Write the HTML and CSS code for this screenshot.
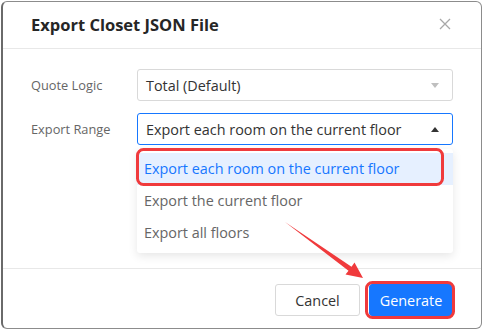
FILE: index.html
```html
<!DOCTYPE html>
<html lang="en">
<head>
    <meta charset="UTF-8">
    <meta name="viewport" content="width=device-width, initial-scale=1.0">
    <title>Export Closet JSON File</title>
    <link rel="stylesheet" href="styles.css">
</head>
<body>
    <div class="modal">
        <div class="modal-header">
            <h2 class="modal-title">Export Closet JSON File</h2>
            <span class="modal-close">
                <svg width="12" height="12" viewBox="0 0 12 12">
                    <path d="M1 1 L11 11 M11 1 L1 11" stroke="#a8a8a8" stroke-width="1.3" fill="none"/>
                </svg>
            </span>
        </div>

        <div class="modal-body">
            <div class="form-row">
                <label class="form-label">Quote Logic</label>
                <div class="select">
                    <span class="select-value">Total (Default)</span>
                    <span class="caret caret-down"></span>
                </div>
            </div>
            <div class="form-row">
                <label class="form-label">Export Range</label>
                <div class="select-wrap">
                    <div class="select select-open">
                        <span class="select-value">Export each room on the current floor</span>
                        <span class="caret caret-up"></span>
                    </div>
                    <ul class="dropdown">
                        <li class="dropdown-item active">Export each room on the current floor</li>
                        <li class="dropdown-item">Export the current floor</li>
                        <li class="dropdown-item">Export all floors</li>
                    </ul>
                </div>
            </div>
        </div>

        <div class="modal-footer">
            <button class="btn btn-cancel">Cancel</button>
            <button class="btn btn-primary">Generate</button>
        </div>
    </div>

    <!-- red annotations drawn over the screenshot -->
    <svg class="marks" width="482" height="330" viewBox="0 0 482 330">
        <rect x="137.5" y="149.5" width="305" height="35" rx="6" fill="none" stroke="#f03a3c" stroke-width="3"/>
        <rect x="366.5" y="282.5" width="87" height="35" rx="6" fill="none" stroke="#f03a3c" stroke-width="3"/>
        <polygon points="285,222 351.5,266.7 354.5,262.5 363,278 345.5,274.5 348.5,270.7" fill="#f03a3c"/>
    </svg>
</body>
</html>
```

FILE: styles.css
```css
* {
    box-sizing: border-box;
}

body {
    margin: 0;
    width: 482px;
    height: 330px;
    overflow: hidden;
    background: #fff;
    font-family: "Open Sans", "Noto Sans", sans-serif;
    position: relative;
}

.modal {
    margin: 1px 0 0 1px;
    width: 481px;
    height: 328px;
    border: 1px solid #8c8c8c;
    border-left: 2px solid #6a6a6a;
    border-radius: 6px;
    display: flex;
    flex-direction: column;
    background: #fff;
}

.modal-header {
    height: 47px;
    border-bottom: 1px solid #e8e8e8;
    display: flex;
    align-items: center;
    justify-content: space-between;
    padding: 0 30px 2px 28px;
}

.modal-title {
    margin: 0;
    font-size: 16.5px;
    font-weight: 700;
    color: #262626;
}

.modal-close {
    display: flex;
}

.modal-body {
    height: 219px;
    padding: 20px 27px 0 28px;
    display: flex;
    flex-direction: column;
    gap: 12px;
}

.form-row {
    display: flex;
    align-items: flex-start;
}

.form-label {
    width: 106px;
    line-height: 32px;
    font-size: 12.8px;
    color: #666;
}

.select-wrap {
    position: relative;
    width: 316px;
}

.select {
    width: 316px;
    height: 32px;
    border: 1px solid #d9d9d9;
    border-radius: 3px;
    padding: 0 13px 0 8px;
    display: flex;
    align-items: center;
    justify-content: space-between;
    font-size: 14.4px;
    color: #333;
}

.select-open {
    border-color: #1677ff;
}

.caret {
    width: 0;
    height: 0;
    border-left: 4px solid transparent;
    border-right: 4px solid transparent;
}

.caret-down {
    border-top: 5px solid #bfbfbf;
}

.caret-up {
    border-bottom: 5px solid #333;
}

.dropdown {
    position: absolute;
    top: 36px;
    left: 0;
    width: 316px;
    margin: 0;
    padding: 4px 0;
    list-style: none;
    background: #fff;
    border-radius: 3px;
    box-shadow: 0 3px 10px rgba(0, 0, 0, 0.1);
}

.dropdown-item {
    height: 32px;
    line-height: 32px;
    padding: 0 7px;
    font-size: 14.4px;
    color: #666;
}

.dropdown-item.active {
    background: #e6f0ff;
    color: #1677ff;
}

.modal-footer {
    flex: 1;
    border-top: 1px solid #e8e8e8;
    padding: 15px 28px 0 0;
    display: flex;
    justify-content: flex-end;
    align-items: flex-start;
    gap: 9px;
}

.btn {
    height: 32px;
    padding: 0;
    border: 1px solid #d9d9d9;
    border-radius: 3px;
    background: #fff;
    font-family: inherit;
    font-size: 14.4px;
    color: #333;
}

.btn-cancel {
    width: 85px;
}

.btn-primary {
    width: 84px;
    background: #1677ff;
    border-color: #1677ff;
    color: #fff;
}

.marks {
    position: absolute;
    top: 0;
    left: 0;
    pointer-events: none;
}
```
